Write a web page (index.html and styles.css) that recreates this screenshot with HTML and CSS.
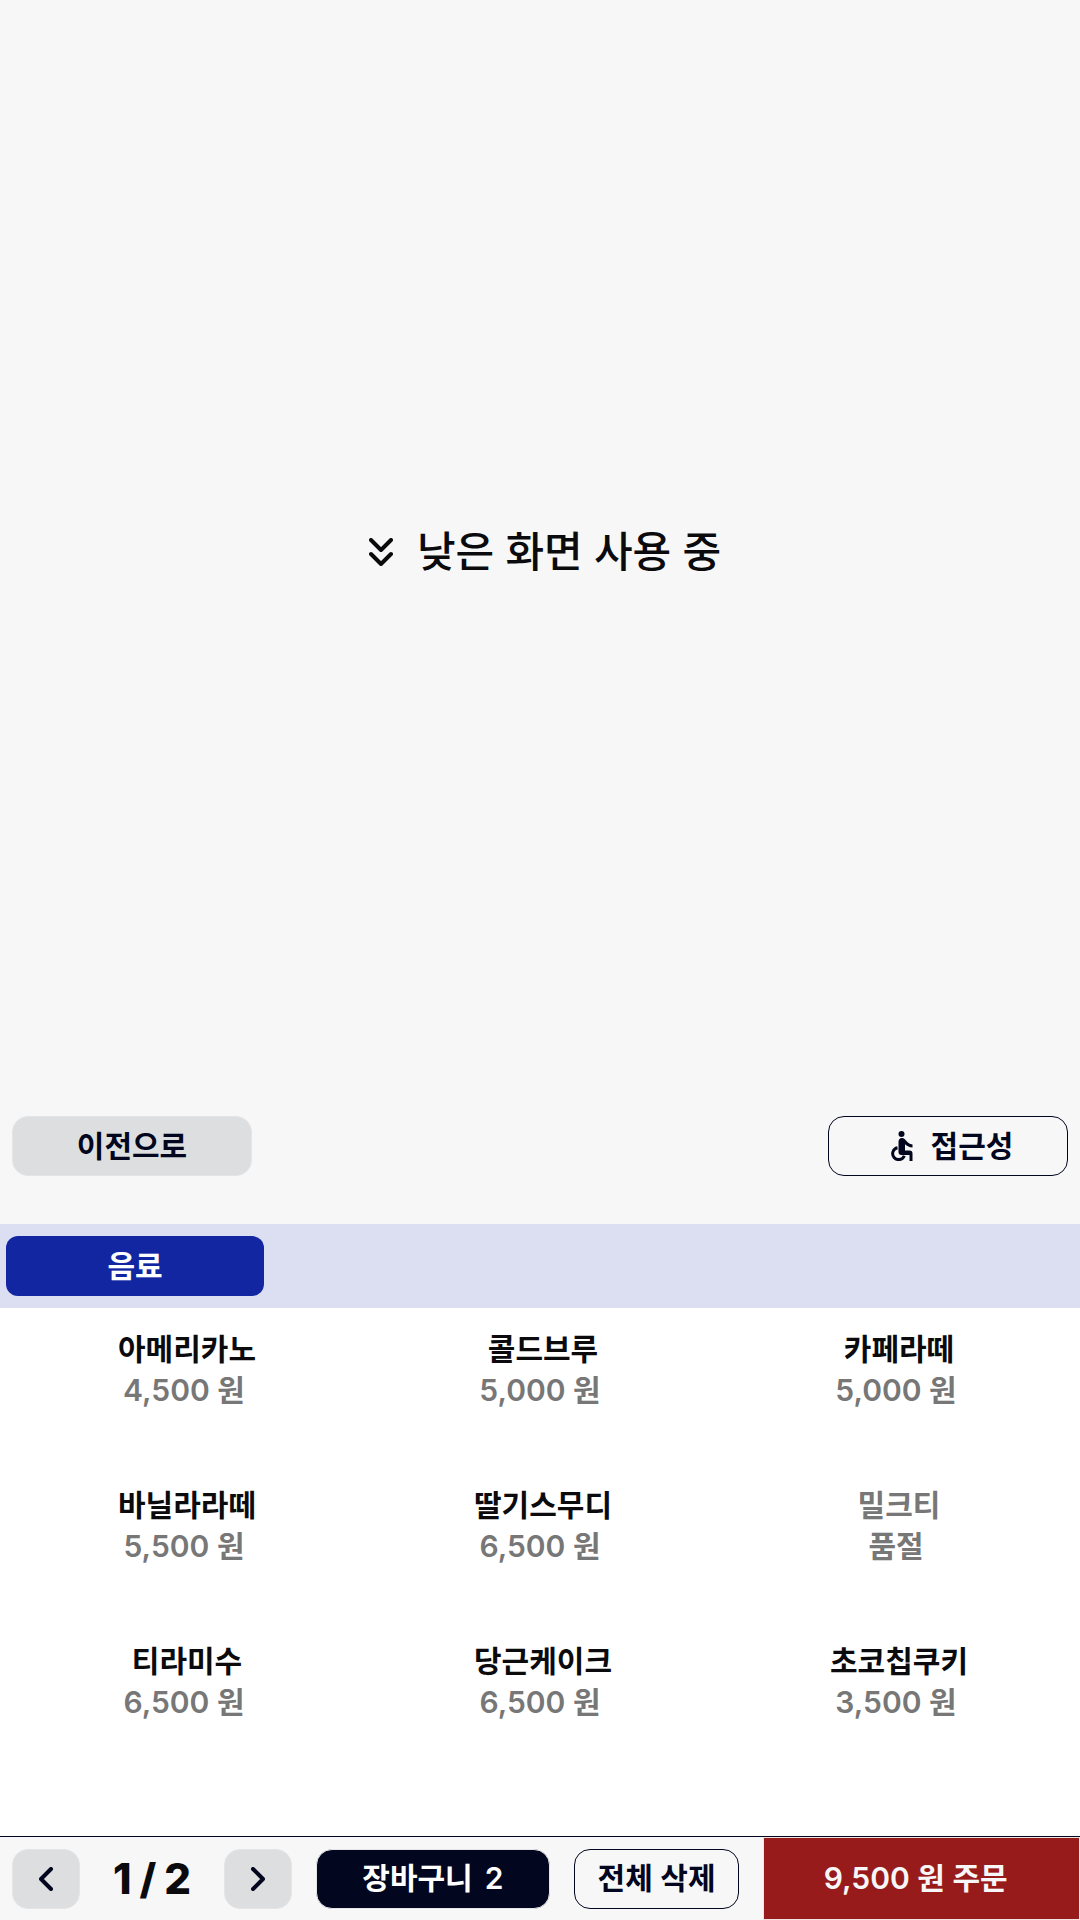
FILE: index.html
```html
<!DOCTYPE html>
<html lang="ko">
<head>
    <meta charset="UTF-8">
    <meta name="viewport" content="width=device-width, initial-scale=1.0">
    <title>메뉴 선택</title>
    <link rel="stylesheet" href="styles.css">
</head>
<body>
    <div class="notice">
        <svg class="notice-icon" viewBox="0 0 24 28" aria-hidden="true">
            <path d="M2 2l10 10L22 2M2 16l10 10L22 16"/>
        </svg>
        <p>낮은 화면 사용 중</p>
    </div>

    <header class="top-bar">
        <button class="button button-gray" type="button">이전으로</button>
        <button class="button button-outline access" type="button">
            <svg class="access-icon" viewBox="0 0 22 30" aria-hidden="true">
                <circle cx="10.5" cy="3" r="3"/>
                <path d="M7.500 11c0-4.500 4.500-5 7-2 1.800 2.200 4 4 7 4.500v3c-3-.3-5.500-1.500-7.500-3.300V19.500H18.500q3 0 3 3V30h-3v-6h-8q-3 0-3-3z"/>
                <path class="wheel" d="M6.500 16.700a6 6 0 1 0 6.800 8"/>
            </svg>
            <span>접근성</span>
        </button>
    </header>

    <nav class="tabs">
        <button class="tab" type="button">음료</button>
    </nav>

    <main class="menu">
        <button class="item" type="button"><span class="name">아메리카노</span><span class="price">4,500 원</span></button>
        <button class="item" type="button"><span class="name">콜드브루</span><span class="price">5,000 원</span></button>
        <button class="item" type="button"><span class="name">카페라떼</span><span class="price">5,000 원</span></button>
        <button class="item" type="button"><span class="name">바닐라라떼</span><span class="price">5,500 원</span></button>
        <button class="item" type="button"><span class="name">딸기스무디</span><span class="price">6,500 원</span></button>
        <button class="item" type="button" disabled><span class="name">밀크티</span><span class="price">품절</span></button>
        <button class="item" type="button"><span class="name">티라미수</span><span class="price">6,500 원</span></button>
        <button class="item" type="button"><span class="name">당근케이크</span><span class="price">6,500 원</span></button>
        <button class="item" type="button"><span class="name">초코칩쿠키</span><span class="price">3,500 원</span></button>
    </main>

    <footer class="bottom-bar">
        <button class="button button-gray page-button" type="button" aria-label="이전 페이지">
            <svg class="arrow" viewBox="0 0 14 24" aria-hidden="true"><path d="M12 2L2 12l10 10"/></svg>
        </button>
        <div class="page"><span>1</span><span>/</span><span>2</span></div>
        <button class="button button-gray page-button" type="button" aria-label="다음 페이지">
            <svg class="arrow" viewBox="0 0 14 24" aria-hidden="true"><path d="M2 2l10 10L2 22"/></svg>
        </button>
        <button class="button cart" type="button"><span>장바구니</span><span>2</span></button>
        <button class="button button-outline clear" type="button">전체 삭제</button>
        <button class="order" type="button">9,500 원 주문</button>
    </footer>
</body>
</html>
```
FILE: styles.css
```css
* {
    margin: 0;
    padding: 0;
    box-sizing: border-box;
}

body {
    display: flex;
    flex-direction: column;
    min-height: 100vh;
    background-color: #f7f7f7;
    color: #0b0b0d;
    font-family: Inter, "Noto Sans CJK KR", sans-serif;
    font-size: 30px;
    line-height: 41px;
}

button {
    border: none;
    background: none;
    color: inherit;
    font: inherit;
    font-weight: 600;
    cursor: pointer;
}

svg {
    flex: none;
    fill: none;
    stroke: currentColor;
    stroke-linecap: round;
    stroke-linejoin: round;
}

/* Empty upper half in low-screen mode */
.notice {
    flex: 1;
    display: flex;
    align-items: center;
    justify-content: center;
    gap: 24px;
    padding: 24px 0 24px 10px;
    font-size: 42px;
    font-weight: 500;
    line-height: 60px;
}

.notice-icon {
    width: 24px;
    height: 28px;
    stroke-width: 4;
}

.top-bar {
    display: flex;
    justify-content: space-between;
    padding: 12px 12px 48px;
}

.button {
    display: flex;
    align-items: center;
    justify-content: center;
    width: 240px;
    height: 60px;
    gap: 18px;
    border-radius: 16px;
    color: #02061e;
}

.button-gray {
    background-color: #dddedf;
    border: 1px solid #e4e5e6;
}

.button-outline {
    border: 1px solid #02061e;
}

.access {
    padding-left: 8px;
}

.access-icon {
    width: 22px;
    height: 30px;
    fill: currentColor;
    stroke: none;
}

.access-icon .wheel {
    fill: none;
    stroke: currentColor;
    stroke-width: 3;
    stroke-linecap: butt;
}

.tabs {
    display: flex;
    padding: 12px 6px;
    background-color: #dcdff1;
}

.tab {
    width: 258px;
    height: 60px;
    border-radius: 12px;
    background-color: #1226a1;
    color: #fff;
}

/* Menu items */
.menu {
    display: grid;
    grid-template-columns: repeat(3, 1fr);
    grid-auto-rows: 156px;
    padding: 21px 6px 39px;
    background-color: #fff;
}

.item {
    display: flex;
    flex-direction: column;
    align-items: center;
}

.name {
    padding-left: 6px;
    font-weight: 700;
}

.price,
.item:disabled {
    color: #777;
}

.bottom-bar {
    display: flex;
    align-items: center;
    gap: 24px;
    padding-left: 12px;
    border-top: 1px solid #02061e;
}

.page-button {
    flex: none;
    width: 68px;
}

.arrow {
    width: 14px;
    height: 24px;
    stroke-width: 4;
}

.page {
    display: flex;
    justify-content: center;
    gap: 8px;
    width: 96px;
    font-size: 42px;
    font-weight: 800;
}

.cart {
    flex: 232;
    gap: 12px;
    background-color: #02061e;
    border: 1px solid #e4e5e6;
    color: #fff;
}

.clear {
    flex: 164;
}

.order {
    flex: 303;
    height: 83px;
    padding-right: 12px;
    border: 1px solid #f3e4e4;
    background-color: #981b1c;
    color: #f7f7f7;
}
```
